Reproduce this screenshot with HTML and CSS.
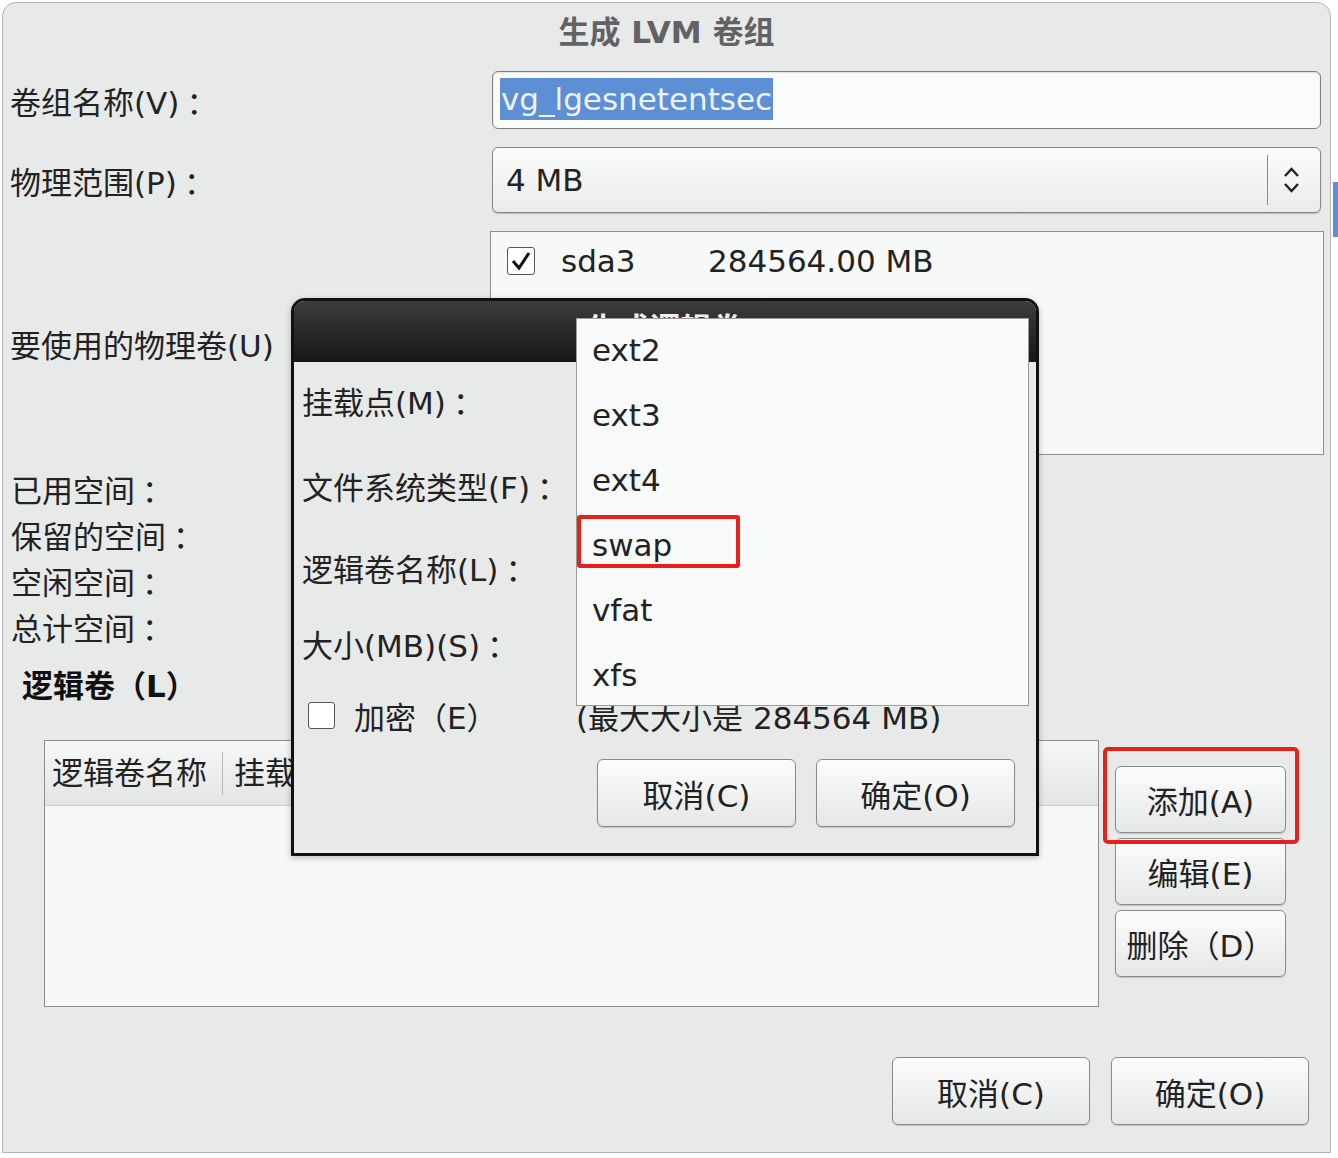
FILE: index.html
```html
<!DOCTYPE html>
<html lang="zh-CN">
<head>
    <meta charset="UTF-8">
    <title>生成 LVM 卷组</title>
    <link rel="stylesheet" href="styles.css">
</head>
<body>
    <div class="window">
        <div class="title">生成 LVM 卷组</div>

        <div class="form">
            <label class="label">卷组名称(V)<span class="colon">：</span></label>
            <div class="text-input"><span class="selected">vg_lgesnetentsec</span></div>

            <label class="label">物理范围(P)<span class="colon">：</span></label>
            <div class="combo">
                <span class="combo-value">4 MB</span>
                <span class="combo-sep"></span>
                <svg class="combo-arrows" width="17" height="28" viewBox="0 0 17 28">
                    <path d="M2 10 L8.5 3 L15 10 M2 18 L8.5 25 L15 18" fill="none" stroke="#222" stroke-width="2.4"/>
                </svg>
            </div>

            <label class="label">要使用的物理卷(U)</label>
            <div class="pv-list">
                <div class="pv-row">
                    <span class="check">
                        <svg width="22" height="22" viewBox="0 0 22 22">
                            <path d="M3 11 L9 18 L19 3" fill="none" stroke="#111" stroke-width="3"/>
                        </svg>
                    </span>
                    <span class="pv-name">sda3</span>
                    <span class="pv-size">284564.00 MB</span>
                </div>
            </div>
        </div>

        <div class="space-info">
            <div>已用空间<span class="colon">：</span></div>
            <div>保留的空间<span class="colon">：</span></div>
            <div>空闲空间<span class="colon">：</span></div>
            <div>总计空间<span class="colon">：</span></div>
        </div>

        <h2 class="section">逻辑卷（L）</h2>

        <div class="lv-area">
            <div class="lv-table">
                <div class="lv-head">
                    <span class="col col-name">逻辑卷名称</span>
                    <span class="col">挂载点/RAID/卷</span>
                </div>
            </div>
            <div class="lv-buttons">
                <button class="btn btn-mark">添加(A)</button>
                <button class="btn">编辑(E)</button>
                <button class="btn">删除（D）</button>
            </div>
        </div>

        <div class="actions">
            <button class="btn btn-wide">取消(C)</button>
            <button class="btn btn-wide">确定(O)</button>
        </div>

        <!-- make logical volume dialog, on top of the group window -->
        <div class="dialog">
            <div class="dialog-title">生成逻辑卷</div>
            <div class="dialog-body">
                <label class="label">挂载点(M)<span class="colon">：</span></label>
                <div></div>
                <label class="label">文件系统类型(F)<span class="colon">：</span></label>
                <div></div>
                <label class="label">逻辑卷名称(L)<span class="colon">：</span></label>
                <div></div>
                <label class="label">大小(MB)(S)<span class="colon">：</span></label>
                <div></div>
                <label class="enc"><span class="check"></span>加密（E）</label>
                <div class="hint">(最大大小是 284564 MB)</div>
            </div>
            <div class="dialog-actions">
                <button class="btn btn-dlg">取消(C)</button>
                <button class="btn btn-dlg">确定(O)</button>
            </div>

            <ul class="fs-menu">
                <li>ext2</li>
                <li>ext3</li>
                <li>ext4</li>
                <li class="picked">swap</li>
                <li>vfat</li>
                <li>xfs</li>
            </ul>
        </div>
    </div>
    <div class="edge"></div>
</body>
</html>
```

FILE: styles.css
```css
body {
    margin: 0;
    background: #fff;
    font-family: "DejaVu Sans", "Noto Sans CJK SC", sans-serif;
    font-size: 31px;
    color: #222;
}
.window {
    position: relative;
    box-sizing: border-box;
    width: 1329px;
    margin: 2px 0 0 2px;
    padding: 0 0 27px;
    background: #e8eaea;
    border: 1px solid #b3b6b6;
    border-radius: 14px 14px 0 0;
}
.title {
    height: 58px;
    line-height: 58px;
    margin-bottom: 10px;
    text-align: center;
    font-weight: bold;
    color: #626262;
}
.label {
    white-space: nowrap;
}
/* the original font puts the full-width colon further right */
.colon {
    margin-left: 7px;
}

/* top form */
.form {
    display: grid;
    grid-template-columns: 482px 1fr;
    row-gap: 18px;
    align-items: center;
    padding: 0 9px 0 7px;
}
.text-input {
    height: 58px;
    box-sizing: border-box;
    padding: 6px 0 0 7px;
    background: #fafbfb;
    border: 1px solid #7d7f7f;
    border-radius: 6px;
    box-shadow: inset 0 1px 2px rgba(0,0,0,0.12);
}
.selected {
    display: inline-block;
    line-height: 42px;
    padding: 0 1px;
    background: #5d8fd5;
    color: #eef3fb;
}
.combo {
    display: flex;
    align-items: center;
    height: 66px;
    box-sizing: border-box;
    padding-left: 13px;
    background: linear-gradient(#fbfbfb, #eaecec);
    border: 1px solid #858787;
    border-radius: 6px;
    box-shadow: 0 1px 1px rgba(0,0,0,0.2);
}
.combo-value {
    flex: 1;
}
.combo-sep {
    width: 1px;
    height: 50px;
    margin-right: 15px;
    background: #8a8a8a;
}
.combo-arrows {
    margin-right: 20px;
}
.pv-list {
    height: 224px;
    box-sizing: border-box;
    margin: 0 -3px 0 -2px;
    background: #f7f9f9;
    border: 1px solid #8f9191;
}
.pv-row {
    display: flex;
    align-items: center;
    height: 58px;
    padding-left: 16px;
}
.check {
    display: inline-flex;
    align-items: center;
    justify-content: center;
    width: 28px;
    height: 28px;
    box-sizing: border-box;
    background: #fff;
    border: 1px solid #555;
    border-radius: 3px;
}
.pv-name {
    width: 147px;
    margin-left: 26px;
}

/* space summary */
.space-info {
    margin-top: 13px;
    padding-left: 8px;
    line-height: 46px;
}
.section {
    margin: 11px 0 31px;
    padding-left: 19px;
    font-size: 31px;
    line-height: 46px;
    font-weight: bold;
    color: #111;
}

/* logical volume table */
.lv-area {
    display: flex;
    gap: 16px;
    padding-left: 41px;
}
.lv-table {
    width: 1055px;
    height: 267px;
    box-sizing: border-box;
    background: #f7f9f9;
    border: 1px solid #8c8e8e;
}
.lv-head {
    display: flex;
    align-items: center;
    height: 64px;
    background: linear-gradient(#f6f7f7, #e3e5e5);
    border-bottom: 1px solid #c9cbcb;
}
.col {
    line-height: 43px;
    padding-left: 11px;
    white-space: nowrap;
}
.col-name {
    width: 170px;
    padding-left: 7px;
    border-right: 1px solid #b9bbbb;
}
.lv-buttons {
    display: flex;
    flex-direction: column;
    gap: 5px;
    width: 171px;
    padding-top: 26px;
}
.btn {
    height: 67px;
    padding: 0;
    font: inherit;
    color: #222;
    background: linear-gradient(#fcfcfc, #e6e7e7);
    border: 1px solid #8a8c8c;
    border-radius: 6px;
    box-shadow: 0 1px 1px rgba(0,0,0,0.18);
}
.btn-mark {
    position: relative;
}
.btn-mark::after {
    content: "";
    position: absolute;
    left: -13px;
    top: -20px;
    right: -14px;
    bottom: -12px;
    border: 4px solid #e5211d;
    border-radius: 5px;
}
.actions {
    display: flex;
    justify-content: flex-end;
    gap: 21px;
    margin-top: 50px;
    padding-right: 21px;
}
.btn-wide {
    width: 198px;
    height: 68px;
}

/* dialog */
.dialog {
    position: absolute;
    left: 288px;
    top: 295px;
    width: 748px;
    height: 558px;
    box-sizing: border-box;
    background: #e8eaea;
    border: 3px solid #111;
    border-radius: 14px 14px 0 0;
    box-shadow: 0 2px 6px rgba(0,0,0,0.25);
}
.dialog-title {
    height: 61px;
    line-height: 56px;
    text-align: center;
    font-weight: bold;
    color: #eee;
    background: linear-gradient(#3c3c3c, #161616);
    border-radius: 11px 11px 0 0;
}
.dialog-body {
    display: grid;
    grid-template-columns: 274px 1fr;
    grid-template-rows: 76px 94px 70px 82px 62px;
    align-items: center;
    padding-left: 8px;
}
.enc {
    display: flex;
    align-items: center;
    gap: 19px;
    padding-left: 6px;
}
.enc .check {
    width: 27px;
    height: 27px;
}
.hint {
    white-space: nowrap;
}
.dialog-actions {
    display: flex;
    justify-content: flex-end;
    gap: 20px;
    margin-top: 13px;
    padding-right: 21px;
}
.btn-dlg {
    width: 199px;
    height: 68px;
}
.fs-menu {
    position: absolute;
    left: 282px;
    top: 17px;
    width: 453px;
    height: 388px;
    box-sizing: border-box;
    margin: 0;
    padding: 0;
    overflow: hidden;
    list-style: none;
    background: #f8fafa;
    border: 1px solid #9a9c9c;
}
.fs-menu li {
    height: 65px;
    line-height: 63px;
    padding-left: 15px;
}
.fs-menu .picked {
    position: relative;
}
.fs-menu .picked::after {
    content: "";
    position: absolute;
    left: 0;
    top: 1px;
    width: 163px;
    height: 53px;
    box-sizing: border-box;
    border: 4px solid #e5211d;
    border-radius: 3px;
}
.edge {
    position: absolute;
    left: 1333px;
    top: 182px;
    width: 5px;
    height: 55px;
    background: #5b8fd6;
}
```
